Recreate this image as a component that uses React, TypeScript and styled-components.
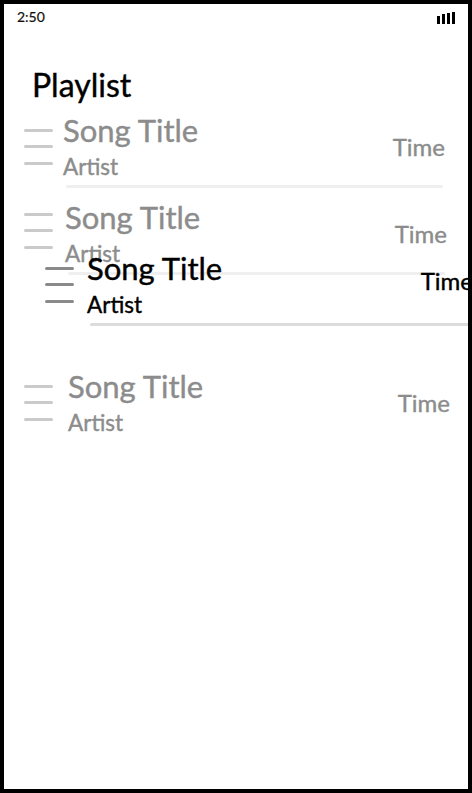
import React from "react";
import styled, { createGlobalStyle } from "styled-components";

const Global = createGlobalStyle`
  html, body { margin: 0; padding: 0; background: #fff; }
  body { font-family: Lato, "Open Sans", sans-serif; }
  * { box-sizing: border-box; }
`;

const Phone = styled.div`
  position: relative;
  width: 472px;
  height: 793px;
  border: 4px solid #000;
  background: #fff;
  overflow: hidden;
  display: flex;
  flex-direction: column;
`;

const StatusBar = styled.div`
  display: flex;
  justify-content: space-between;
  align-items: flex-end;
  height: 21px;
  padding: 0 13px 0 13px;
  font-size: 14px;
  line-height: 16px;
  color: #111;
  -webkit-text-stroke: 0.2px #111;
`;

const Signal = styled.div`
  display: flex;
  align-items: flex-end;
  gap: 2px;
  height: 12px;
  margin-bottom: 1px;
`;

const Bar = styled.span<{ $h: number }>`
  display: block;
  width: 3px;
  height: ${(p) => p.$h}px;
  background: #000;
`;

const Title = styled.h1`
  margin: 40px 0 7px 28px;
  font-size: 32px;
  font-weight: 400;
  line-height: 40px;
  color: #000;
  -webkit-text-stroke: 0.4px #000;
`;

const List = styled.div`
  display: flex;
  flex-direction: column;
`;

const Row = styled.div<{ $shift: number; $mt: number }>`
  display: grid;
  grid-template-columns: 29px 1fr auto;
  column-gap: ${(p) => 10 + p.$shift}px;
  align-items: center;
  margin-top: ${(p) => p.$mt}px;
  padding: 0 ${(p) => 23 - p.$shift}px 11px 20px;
`;

const Handle = styled.div<{ $dark?: boolean; $lift: number }>`
  display: flex;
  flex-direction: column;
  gap: 13.5px;
  margin-top: ${(p) => -2 * p.$lift}px;
  span {
    display: block;
    height: 3px;
    border-radius: 2px;
    background: ${(p) => (p.$dark ? "#8a8a8a" : "#cacaca")};
  }
`;

const Texts = styled.div`
  display: flex;
  flex-direction: column;
`;

const Label = styled.div<{ $dark?: boolean }>`
  color: ${(p) => (p.$dark ? "#000" : "#8c8c8c")};
  -webkit-text-stroke: 0.4px ${(p) => (p.$dark ? "#000" : "#8c8c8c")};
`;

const SongTitle = styled(Label)`
  font-size: 31px;
  line-height: 36px;
`;

const Artist = styled(Label)`
  margin-top: 5px;
  font-size: 22.5px;
  line-height: 28px;
`;

const Time = styled(Label)<{ $raise: number }>`
  font-size: 24px;
  line-height: 28px;
  margin-bottom: ${(p) => 2 * p.$raise}px;
`;

const Divider = styled.div<{ $dark?: boolean }>`
  grid-column: 2 / 4;
  height: 3px;
  margin: 4px 2px 0 3px;
  border-radius: 2px;
  background: ${(p) => (p.$dark ? "#dcdcdc" : "#efefef")};
`;

const Dragged = styled.div`
  position: absolute;
  left: 21px;
  top: 246px;
  width: 468px;
`;

type Song = { shift: number; mt: number; divider: boolean; lift?: number; raise?: number };

const songs: Song[] = [
  { shift: 0, mt: 0, divider: true },
  { shift: 2, mt: 0, divider: true, lift: 3 },
  { shift: 5, mt: 82, divider: false },
];

function SongRow({ shift, mt, divider, lift = 0, raise = 0, dark }: Song & { dark?: boolean }) {
  return (
    <Row $shift={shift} $mt={mt}>
      <Handle $dark={dark} $lift={lift}>
        <span />
        <span />
        <span />
      </Handle>
      <Texts>
        <SongTitle $dark={dark}>Song Title</SongTitle>
        <Artist $dark={dark}>Artist</Artist>
      </Texts>
      <Time $dark={dark} $raise={raise}>
        Time
      </Time>
      {divider && <Divider $dark={dark} />}
    </Row>
  );
}

export default function App() {
  return (
    <>
      <Global />
      <Phone>
        <StatusBar>
          <span>2:50</span>
          <Signal>
            <Bar $h={8} />
            <Bar $h={10} />
            <Bar $h={11} />
            <Bar $h={12} />
          </Signal>
        </StatusBar>
        <Title>Playlist</Title>
        <List>
          {songs.map((s, i) => (
            <SongRow key={i} {...s} />
          ))}
        </List>
        <Dragged>
          <SongRow shift={3} mt={0} divider raise={4} dark />
        </Dragged>
      </Phone>
    </>
  );
}
